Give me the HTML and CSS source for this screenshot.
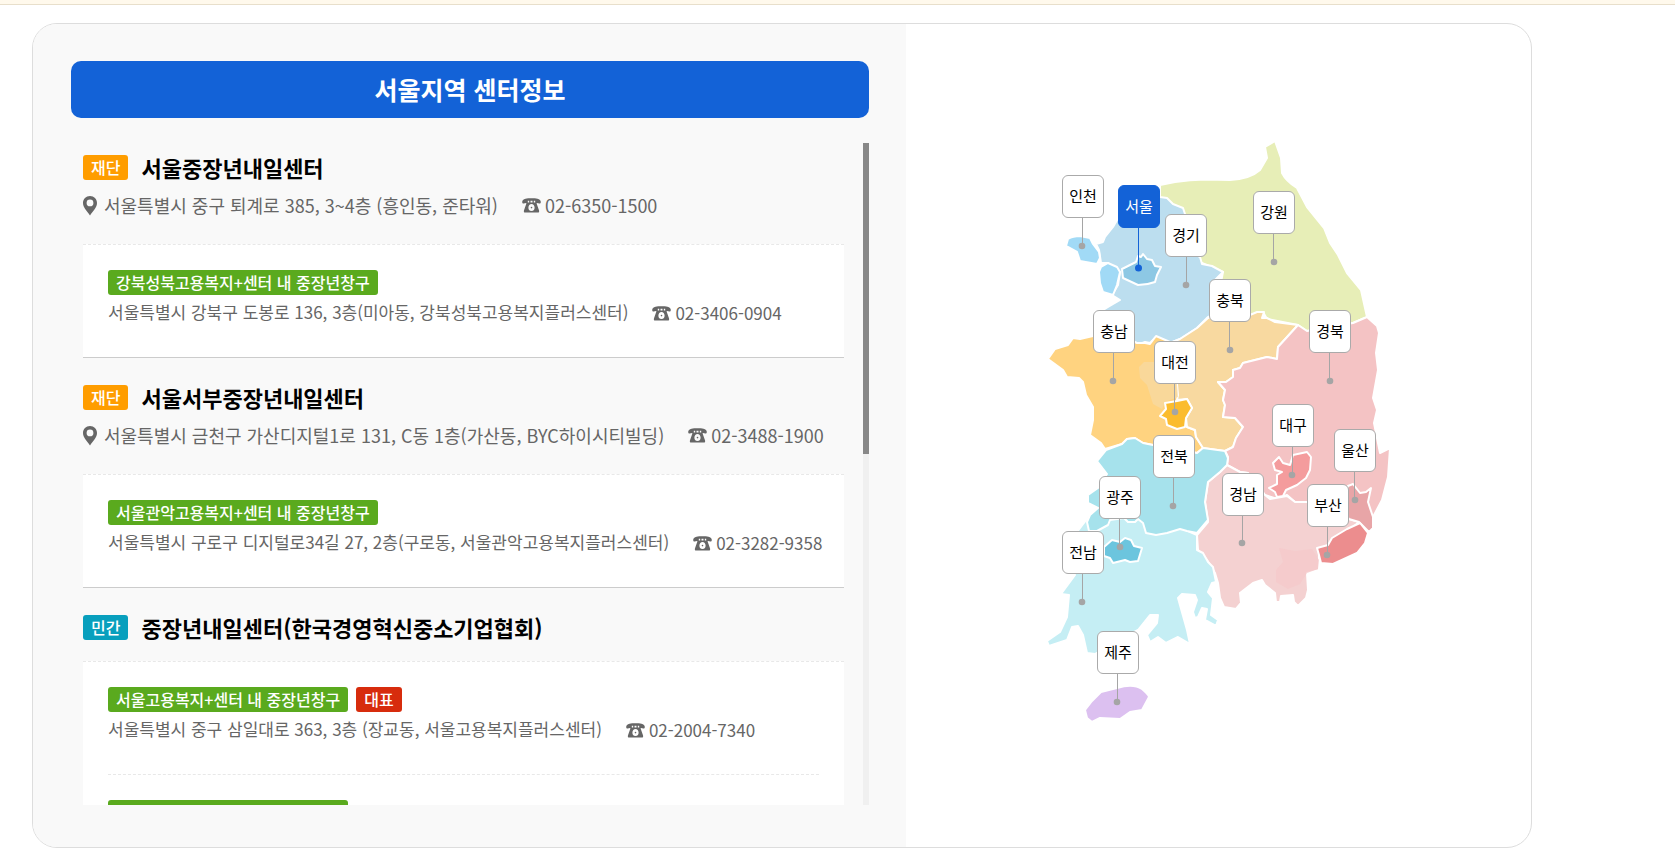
FILE: index.html
```
<!DOCTYPE html>
<html lang="ko">
<head>
<meta charset="utf-8">
<meta name="viewport" content="width=device-width, initial-scale=1">
<title>서울지역 센터정보</title>
<link rel="stylesheet" href="styles.css">
</head>
<body>
<svg class="sprite" aria-hidden="true">
  <symbol id="pin" viewBox="0 0 14 20"><path fill-rule="evenodd" d="M7 0C3 0 0 3 0 7c0 4.500 4 8 7 12.500C10 15 14 11.500 14 7c0-4-3-7-7-7Zm0 3.500a3.400 3.400 0 1 1 0 6.800a3.400 3.400 0 0 1 0-6.800Z"/></symbol>
  <symbol id="tel" viewBox="0 0 19 15"><path fill-rule="evenodd" d="M3.500.8C6.500.2 12.500.2 15.500.8c2 .5 3.500 1.800 3.300 3.400c-.1 1-.7 1.300-1.500 1.200l-2.300-.4c-.4 0-.5.300-.3.800l2.200 6.200c.6 1.700.1 2.600-1 2.600H3.100c-1.100 0-1.600-.9-1-2.600l2.200-6.200c.2-.5.100-.8-.3-.8l-2.300.4C.9 5.500.3 5.200.2 4.200C0 2.600 1.500 1.300 3.500.8ZM5.800 2.800V4.600H7.200V2.800ZM8.500 2.800V4.600H10.500V2.800ZM11.800 2.800V4.600H13.200V2.800ZM9.500 6C7.700 6 6.400 7.600 6.400 9.600S7.200 13 9.500 13S12.600 11.600 12.600 9.600S11.300 6 9.500 6Z"/><circle cx="9.500" cy="9.600" r=".8"/></symbol>
</svg>
<div class="topline"></div>
<main class="page">
  <section class="finder">
    <div class="info">
      <h2 class="region-title">서울지역 센터정보</h2>
      <div class="list-box">
        <div class="scroller" tabindex="0">
          <ul class="centers">
            <li class="center">
              <div class="center-head">
                <h3 class="center-name"><span class="tag tag-orange">재단</span>서울중장년내일센터</h3>
                <p class="address"><svg class="ico-pin"><use href="#pin"/></svg><span>서울특별시 중구 퇴계로 385, 3~4층 (흥인동, 준타워)</span><span class="tel"><svg class="ico-tel"><use href="#tel"/></svg>02-6350-1500</span></p>
              </div>
              <ul class="desks">
                <li class="desk">
                  <div class="tags"><span class="tag tag-green">강북성북고용복지+센터 내 중장년창구</span></div>
                  <p class="desk-address"><span>서울특별시 강북구 도봉로 136, 3층(미아동, 강북성북고용복지플러스센터)</span><span class="tel"><svg class="ico-tel"><use href="#tel"/></svg>02-3406-0904</span></p>
                </li>
              </ul>
            </li>
            <li class="center">
              <div class="center-head">
                <h3 class="center-name"><span class="tag tag-orange">재단</span>서울서부중장년내일센터</h3>
                <p class="address"><svg class="ico-pin"><use href="#pin"/></svg><span>서울특별시 금천구 가산디지털1로 131, C동 1층(가산동, BYC하이시티빌딩)</span><span class="tel"><svg class="ico-tel"><use href="#tel"/></svg>02-3488-1900</span></p>
              </div>
              <ul class="desks">
                <li class="desk">
                  <div class="tags"><span class="tag tag-green">서울관악고용복지+센터 내 중장년창구</span></div>
                  <p class="desk-address"><span>서울특별시 구로구 디지털로34길 27, 2층(구로동, 서울관악고용복지플러스센터)</span><span class="tel"><svg class="ico-tel"><use href="#tel"/></svg>02-3282-9358</span></p>
                </li>
              </ul>
            </li>
            <li class="center">
              <div class="center-head compact">
                <h3 class="center-name"><span class="tag tag-teal">민간</span>중장년내일센터(한국경영혁신중소기업협회)</h3>
              </div>
              <ul class="desks">
                <li class="desk">
                  <div class="tags"><span class="tag tag-green">서울고용복지+센터 내 중장년창구</span><span class="tag tag-red">대표</span></div>
                  <p class="desk-address"><span>서울특별시 중구 삼일대로 363, 3층 (장교동, 서울고용복지플러스센터)</span><span class="tel"><svg class="ico-tel"><use href="#tel"/></svg>02-2004-7340</span></p>
                </li>
                <li class="desk">
                  <div class="tags"><span class="tag tag-green">서울고용복지+센터 내 중장년창구</span></div>
                </li>
              </ul>
            </li>
          </ul>
        </div>
        <div class="track"><div class="thumb"></div></div>
      </div>
    </div>
    <div class="map-panel">
      <div class="map">
        <svg class="map-art" viewBox="1038 135 361 601" aria-hidden="true">
          <g class="land">
            <path fill="#e7eeb7" d="M1160 185L1175 182Q1190 180 1205 179.500L1230 180Q1250 179 1260 170L1267 158L1265 147L1275 141L1281 158L1282 173Q1286 181 1297 188L1307 207L1324 228L1330 243L1338 255L1347 273L1361 290L1367 317L1353 323L1307 331L1298 325L1267 319L1263 312L1250 315L1215 312L1223 272L1202 263L1185 250L1160 205Z"/>
            <path fill="#bcdeef" d="M1150 190L1160 197L1167 198L1173 204L1183 208L1185 214L1187 250L1200 257L1202 264L1212 266L1223 272L1214 281L1215 313L1208 317L1197 328L1180 339L1170 343L1156 337L1150 343L1145 342L1137 345L1115 345L1095 315L1108 307L1120 300L1112 295L1118 285L1120 272L1108 263L1101 263L1099 250L1096 244L1103 242L1105 237L1113 227L1117 220L1119 200Z"/>
            <path fill="#a1daf6" d="M1066 246L1068 239Q1073 236 1080 236L1090 238L1093 244L1099 252L1100 258L1097 264L1080 261L1077 252Z"/>
            <path fill="#a1daf6" d="M1099 272L1101 267L1108 263L1117 267L1120 272L1117 285L1113 295L1103 292L1100 283Z"/>
            <path fill="#8dc8e4" d="M1122 269L1136 262L1138 256L1141 257L1143 254L1147 259L1152 260L1155 266L1161 267L1157 275L1155 282Q1147 285 1138 285L1123 278Z"/>
            <path fill="#ffd380" d="M1048 359L1055 349L1068 345L1073 338L1080 339L1093 336L1110 330L1137 343L1145 343L1150 344L1156 336L1170 342L1190 345L1187 427L1195 430L1196 437L1203 448L1197 453L1153 445L1143 443L1135 438L1127 439L1122 444L1105 449L1101 443L1090 435L1093 420L1093 407L1086 395L1083 382L1079 378L1067 377L1063 370Z"/>
            <path fill="#f8d9a0" d="M1170 343L1180 339L1197 328L1208 318L1230 310L1250 315L1257 312L1264 312L1262 318L1267 318L1275 322L1298 325L1278 347L1277 359L1267 357L1243 363L1240 368L1233 370L1233 377L1226 382L1218 382L1225 390L1223 400L1225 405L1223 417L1235 418L1243 427L1236 438L1233 447L1225 451L1203 448L1196 437L1195 430L1187 427L1186 418L1192 408L1187 399L1177 400L1178 395L1177 384L1165 365Z"/>
            <path class="patch" fill="#f8d9a0" d="M1139 367L1144 362L1168 362L1177 384L1178 397L1165 402L1162 409L1153 404L1147 385L1140 378Z"/>
            <path fill="#fbbc2e" d="M1160 416L1166 409L1165 403L1177 401L1187 399L1192 408L1186 418L1185 427L1177 429L1167 425L1166 419Z"/>
            <path fill="#f4c3c4" d="M1298 325L1307 331L1353 323L1367 317L1377 326L1379 333L1376 353L1378 370L1373 398L1377 410L1374 423L1380 453L1390 448L1388 477L1382 500L1373 517L1349 520L1307 502L1295 502L1287 495L1277 499L1265 495L1248 473L1240 472L1227 465L1228 457L1225 451L1233 447L1236 438L1243 427L1235 418L1223 417L1225 405L1223 400L1225 390L1218 382L1226 382L1233 377L1233 370L1240 368L1243 363L1267 357L1277 359L1278 347Z"/>
            <path fill="#f4d1d1" d="M1227 465L1240 472L1248 473L1265 495L1270 499L1287 496L1295 502L1307 502L1349 519L1359 522L1332 545L1319 555L1319 570L1307 573L1308 590L1306 598L1298 606L1294 602L1293 595L1281 596L1280 602L1276 602L1275 593L1265 585L1262 580L1253 583L1240 593L1241 603L1236 609L1224 607L1220 598L1218 583L1215 573L1207 560L1198 550L1197 535L1208 522L1205 502L1208 482L1220 472Z"/>
            <path class="patch" fill="#f5c9cb" d="M1279 548L1295 551L1312 549L1319 560L1318 569L1307 573L1300 584L1288 589L1276 582L1276 570L1283 562Z"/>
            <path fill="#e8a5a7" d="M1348 486L1353 484L1360 493L1366 492L1371 488L1368 502L1373 517L1373 528L1369 532L1359 522L1349 519L1340 505Z"/>
            <path fill="#ec8d8e" d="M1317 548L1328 545L1332 538L1347 529L1360 523L1368 533L1365 543L1357 553L1333 564L1321 563L1319 555Z"/>
            <path fill="#f49c9d" d="M1273 463L1279 457L1283 463L1290 465L1293 455L1307 452L1311 457L1310 470L1306 478L1297 485L1286 490L1283 496L1277 497L1275 492L1269 488L1277 484L1277 475L1282 472L1275 470Z"/>
            <path fill="#c5eef4" d="M1090 515L1077 532L1064 545L1075 575L1061 594L1069 595L1067 617L1060 632L1047 641L1049 646L1067 640L1072 627L1078 626L1083 635L1087 653L1095 654L1110 645L1138 630L1150 615L1158 615L1157 623L1147 635L1150 642L1158 637L1166 643L1178 637L1190 644L1187 630L1178 598L1182 594L1195 595L1197 600L1193 612L1195 618L1198 617L1202 608L1207 609L1205 620L1216 626L1218 620L1211 615L1213 598L1208 592L1212 583L1216 582L1213 567L1208 562L1203 553L1197 550L1197 535L1140 510Z"/>
            <path fill="#a6e2ec" d="M1097 461L1106 450L1122 444L1127 439L1135 438L1143 443L1153 445L1197 453L1203 448L1225 451L1228 458L1227 465L1220 472L1208 482L1205 502L1208 520L1197 533L1187 531L1180 529L1167 533L1156 535L1146 533L1143 523L1138 519L1135 522L1128 522L1124 518L1110 520L1108 525L1097 531L1089 531L1087 522L1090 515L1098 508L1088 503L1088 495L1098 488L1107 474Z"/>
            <path fill="#6cc5de" d="M1104 547L1112 540L1120 542L1125 538L1131 540L1134 546L1142 548L1138 561L1130 562L1125 560L1113 563L1110 558L1104 556Z"/>
            <path fill="#dcc0f0" d="M1085 710L1092 701L1101 692L1117 688Q1133 683 1142 689Q1149 695 1149 697L1142 710L1130 712L1120 719L1100 718L1092 722L1087 718Z"/>
          </g>
          <g class="leads">
            <path d="M1082.500 218V246M1186.500 256V284M1273.500 234V262M1229.500 321V349M1113.500 353V381M1329.500 353V381M1174.500 384V412M1292.500 446V474M1354.500 471V499M1173.500 478V506M1242.500 515V543M1119.500 519V547M1327.500 526V554M1082.500 574V602M1117.500 674V702"/>
            <circle cx="1082" cy="246" r="3.300"/><circle cx="1186" cy="285" r="3.300"/><circle cx="1274" cy="262" r="3.300"/><circle cx="1230" cy="350" r="3.300"/><circle cx="1113" cy="381" r="3.300"/><circle cx="1330" cy="381" r="3.300"/><circle cx="1175" cy="412" r="3.300"/><circle cx="1292" cy="475" r="3.300"/><circle cx="1355" cy="500" r="3.300"/><circle cx="1173" cy="506" r="3.300"/><circle cx="1242" cy="543" r="3.300"/><circle cx="1120" cy="547" r="3.300"/><circle cx="1327" cy="555" r="3.300"/><circle cx="1082" cy="602" r="3.300"/><circle cx="1117" cy="702" r="3.300"/>
          </g>
          <g class="leads current"><path d="M1138.500 228V268"/><circle cx="1138.500" cy="268" r="3.500"/></g>
        </svg>
        <button type="button" class="area incheon">인천</button>
        <button type="button" class="area seoul" aria-pressed="true">서울</button>
        <button type="button" class="area gyeonggi">경기</button>
        <button type="button" class="area gangwon">강원</button>
        <button type="button" class="area chungbuk">충북</button>
        <button type="button" class="area chungnam">충남</button>
        <button type="button" class="area gyeongbuk">경북</button>
        <button type="button" class="area daejeon">대전</button>
        <button type="button" class="area daegu">대구</button>
        <button type="button" class="area ulsan">울산</button>
        <button type="button" class="area jeonbuk">전북</button>
        <button type="button" class="area gyeongnam">경남</button>
        <button type="button" class="area gwangju">광주</button>
        <button type="button" class="area busan">부산</button>
        <button type="button" class="area jeonnam">전남</button>
        <button type="button" class="area jeju">제주</button>
      </div>
    </div>
  </section>
</main>
</body>
</html>
```
FILE: styles.css
```
* { box-sizing: border-box; }
body {
  margin: 0;
  background: #fff;
  color: #000;
  font-family: "Noto Sans CJK KR", "Noto Sans", sans-serif;
  font-size: 16px;
}
h2, h3, p, ul { margin: 0; padding: 0; }
ul { list-style: none; }
.sprite { display: none; }

.topline {
  height: 5px;
  background: #fff9ec;
  border-bottom: 1px solid #e8dfcb;
}
.page { padding: 18px 32px 14px; }
.finder {
  display: grid;
  grid-template-columns: minmax(0, 873fr) minmax(0, 625fr);
  max-width: 1500px;
  border: 1px solid #ddd;
  border-radius: 25px;
  overflow: hidden;
}

/* Center list */
.info {
  padding: 37px 37px 42px 38px;
  background: #f9f9f9;
}
.region-title {
  margin-bottom: 25px;
  border-radius: 10px;
  background: #1362d7;
  color: #fff;
  font-size: 25px;
  font-weight: 700;
  line-height: 57px;
  text-align: center;
}
.list-box { display: flex; }
.scroller {
  flex: 1;
  min-width: 0;
  height: 662px;
  overflow-y: auto;
  scrollbar-width: none;
}
.track { width: 6px; background: #f0f0f0; }
.thumb { height: 47%; background: #888; }
.centers { padding: 0 19px 0 12px; }
.center-head { padding: 23px 0 25px; }
.center:first-child .center-head { padding-top: 8px; }
.center-head.compact { padding-bottom: 17px; }
.center-name {
  display: flex;
  align-items: center;
  gap: 13px;
  font-size: 22px;
  font-weight: 600;
  line-height: 33px;
}
.tag {
  display: inline-block;
  padding: 0 8px;
  border-radius: 3px;
  color: #fff;
  font-size: 16px;
  font-weight: 500;
  line-height: 25px;
  white-space: nowrap;
}
.tag-orange { background: #ff9d00; }
.tag-green { background: #5aaa1e; }
.tag-teal { background: #089fbd; }
.tag-red { background: #d72c0d; }
.address {
  display: flex;
  align-items: center;
  margin-top: 8px;
  color: #666;
  font-size: 18px;
  line-height: 27px;
  white-space: nowrap;
}
.tel {
  display: flex;
  align-items: center;
  gap: 4px;
  margin-left: 24px;
}
.ico-pin {
  width: 14px;
  height: 20px;
  margin-right: 7px;
  fill: #666;
}
.ico-tel {
  width: 19px;
  height: 15px;
  fill: #666;
}
.desks {
  padding: 0 25px;
  border-top: 1px dashed #e8e8e8;
  border-bottom: 1px solid #ccc;
  background: #fff;
}
.desk { padding: 25px 0 32px; }
.desk + .desk { border-top: 1px dashed #e8e8e8; }
.tags { display: flex; gap: 8px; }
.desk-address {
  display: flex;
  margin-top: 3px;
  color: #666;
  font-size: 17px;
  line-height: 27px;
  white-space: nowrap;
}
.desk-address .tel { padding-top: 3px; line-height: 24px; }

/* Region map */
.map-panel {
  display: flex;
  align-items: center;
  justify-content: center;
}
.map { position: relative; flex: none; }
.map-art { display: block; width: 361px; height: 601px; }
.land { stroke: #fff; stroke-width: 2; stroke-linejoin: round; }
.patch { stroke: none; opacity: .8; }
.leads { fill: #a5a5a5; }
.leads path { fill: none; stroke: #a5a5a5; }
.leads.current { fill: #1362d7; }
.leads.current path { stroke: #1362d7; }
.area {
  position: absolute;
  width: 42px;
  height: 43px;
  padding: 0 0 2px;
  border: 1px solid #aaa;
  border-radius: 6px;
  background: #fff;
  color: #000;
  font: 400 15px/22px "Noto Sans CJK KR", "Noto Sans", sans-serif;
  cursor: pointer;
}
.area[aria-pressed="true"] { border-color: #1362d7; background: #1362d7; color: #fff; }
.incheon { left: 24px; top: 40px; }
.seoul { left: 80px; top: 50px; }
.gyeonggi { left: 127px; top: 79px; }
.gangwon { left: 215px; top: 56px; }
.chungbuk { left: 171px; top: 144px; }
.chungnam { left: 55px; top: 175px; }
.gyeongbuk { left: 271px; top: 175px; }
.daejeon { left: 116px; top: 206px; }
.daegu { left: 234px; top: 269px; }
.ulsan { left: 296px; top: 294px; }
.jeonbuk { left: 115px; top: 300px; }
.gyeongnam { left: 184px; top: 338px; }
.gwangju { left: 61px; top: 341px; }
.busan { left: 269px; top: 349px; }
.jeonnam { left: 24px; top: 396px; }
.jeju { left: 59px; top: 496px; }

@media (max-width: 1200px) {
  .finder { grid-template-columns: minmax(0, 1fr); }
  .address, .desk-address { flex-wrap: wrap; white-space: normal; }
}
```
